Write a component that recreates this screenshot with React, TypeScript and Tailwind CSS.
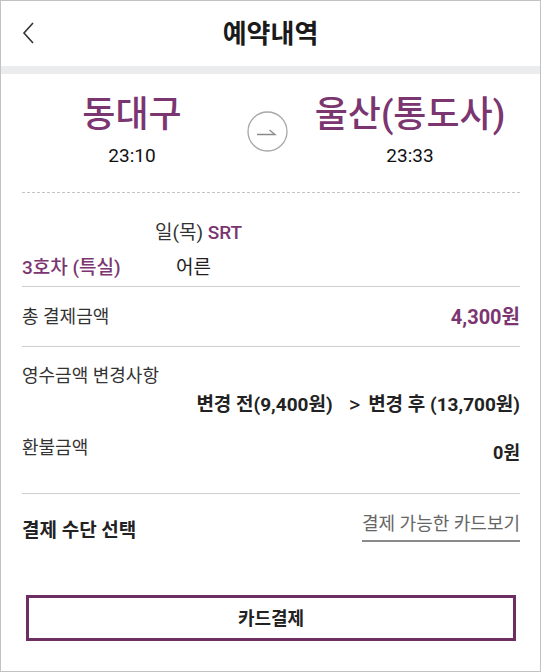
import React from "react";

const PURPLE = "text-[#7b3570]";

function Chevron() {
  return (
    <svg width="16" height="24" viewBox="0 0 16 24" fill="none" stroke="#333" strokeWidth={1.6}>
      <path d="M12 2L3 12l9 10" />
    </svg>
  );
}

function ArrowCircle() {
  return (
    <svg width="41" height="41" viewBox="0 0 41 41" fill="none">
      <circle cx="20.5" cy="20.5" r="19.5" stroke="#a8a8a8" strokeWidth={1.3} />
      <path d="M10 23.5h18l-5.5-4.5" stroke="#8a8a8a" strokeWidth={1.3} />
    </svg>
  );
}

export default function App() {
  return (
    <div
      className="w-[541px] h-[672px] border border-[#c2c2c2] bg-white text-[#222] overflow-hidden"
      style={{ fontFamily: 'Roboto, "Noto Sans CJK KR", sans-serif' }}
    >
      {/* header */}
      <div className="relative h-[65px] flex items-center justify-center">
        <div className="absolute left-[20px] top-[20px]">
          <Chevron />
        </div>
        <h1 className="text-[26px] font-bold leading-[30px] text-[#1a1a1a]">예약내역</h1>
      </div>
      <div className="h-[8px] bg-[#ebecee]" />

      <div className="pl-[21px] pr-[20px]">
        {/* route */}
        <div className="flex items-center pt-[21px]">
          <div className="w-[220px] flex flex-col items-center">
            <span className={`text-[36px] leading-[40px] font-medium ${PURPLE}`}>동대구</span>
            <span className="text-[19px] leading-[24px] mt-[9px] text-[#111]">23:10</span>
          </div>
          <div className="ml-[5px]">
            <ArrowCircle />
          </div>
          <div className="ml-[12px] w-[220px] flex flex-col items-center">
            <span className={`text-[36px] leading-[40px] font-medium ${PURPLE}`}>울산(통도사)</span>
            <span className="text-[19px] leading-[24px] mt-[9px] text-[#111]">23:33</span>
          </div>
        </div>
        <div className="mt-[24px] border-t border-dashed border-[#c4c4c4]" />

        {/* train info */}
        <div className="pt-[27px] pl-[133px] text-[19px] leading-[26px] text-[#333]">
          일(목) <span className={`font-medium ${PURPLE}`}>SRT</span>
        </div>
        <div className="mt-[9px] flex text-[19px] leading-[26px]">
          <span className={`w-[154px] font-medium ${PURPLE}`}>3호차 (특실)</span>
          <span className="text-[#222]">어른</span>
        </div>
        <div className="mt-[5px] border-t border-[#cfcfcf]" />

        {/* total */}
        <div className="h-[60px] flex items-center justify-between border-b border-[#cfcfcf]">
          <span className="text-[18px] leading-[26px] text-[#333]">총 결제금액</span>
          <span className={`text-[20px] leading-[26px] font-bold ${PURPLE}`}>4,300원</span>
        </div>

        {/* change details */}
        <div className="pt-[16px] pb-[27px] border-b border-[#cfcfcf]">
          <div className="text-[18px] leading-[26px] text-[#333]">영수금액 변경사항</div>
          <div className="mt-[3px] flex justify-end items-center text-[19px] leading-[26px] font-bold text-[#222]">
            <span>변경 전(9,400원)</span>
            <span className="ml-[16px] mr-[8px] text-[22px] font-normal">&gt;</span>
            <span>변경 후 (13,700원)</span>
          </div>
          <div className="mt-[17px] flex items-start justify-between">
            <span className="text-[18px] leading-[26px] text-[#333]">환불금액</span>
            <span className="pt-[5px] text-[18px] leading-[26px] font-bold text-[#222]">0원</span>
          </div>
        </div>

        {/* payment method */}
        <div className="mt-[18px] flex items-start justify-between">
          <span className="pt-[6px] text-[19px] leading-[26px] font-bold text-[#222]">결제 수단 선택</span>
          <span className="text-[18px] leading-[24px] text-[#666] border-b-2 border-[#8a8a8a] pb-[4px]">
            결제 가능한 카드보기
          </span>
        </div>

        <button className="mt-[51px] mx-[4px] w-[490px] h-[46px] border-[3px] border-[#6d2f63] bg-white text-[18px] font-bold text-[#222]">
          카드결제
        </button>
      </div>
    </div>
  );
}
